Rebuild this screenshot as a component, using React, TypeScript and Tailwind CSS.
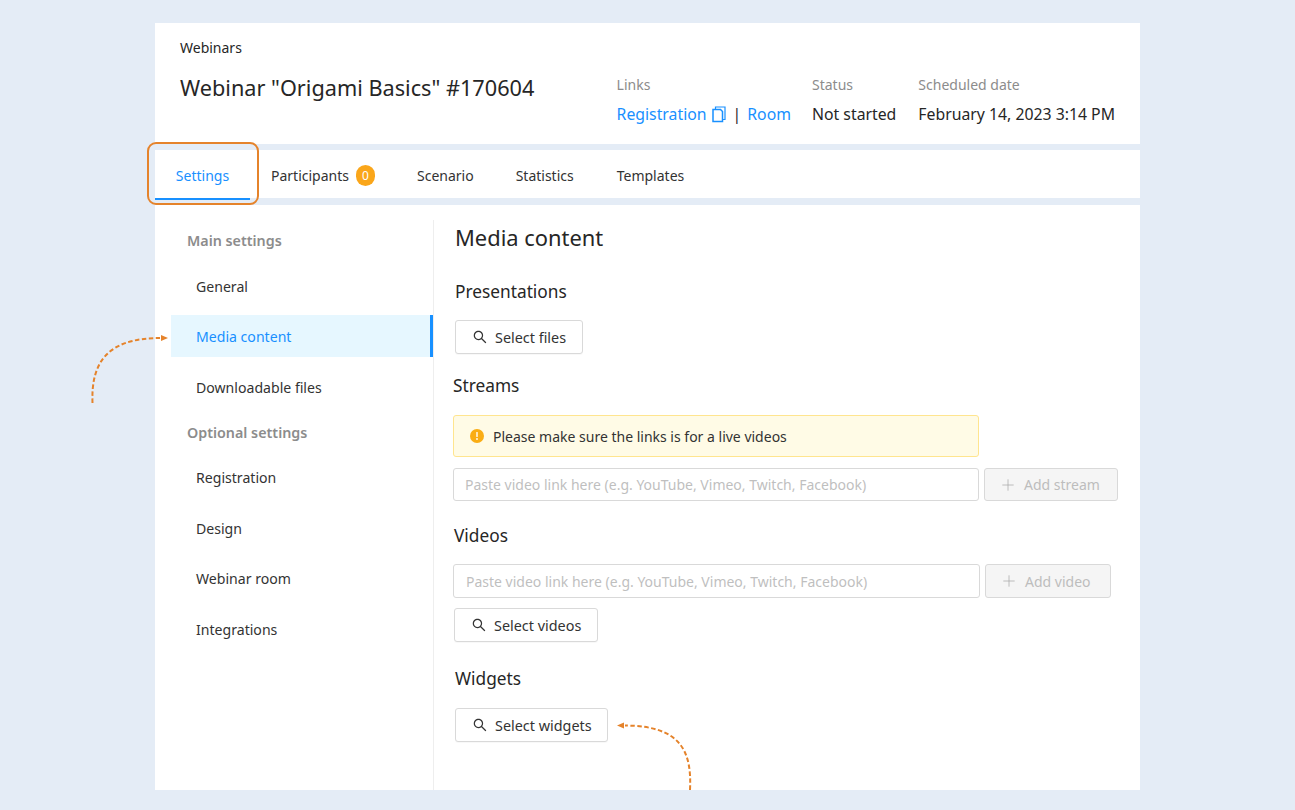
import { Plus } from "lucide-react";
import { AiOutlineSearch } from "react-icons/ai";

function CopyIcon() {
  return (
    <svg width="14" height="17" viewBox="0 0 14 17" fill="none" className="ml-[5px]">
      <path d="M3.5 3V1h9.500v12.500h-2" stroke="#1890ff" strokeWidth="1.200" />
      <path d="M1 3.500h7.500l2 2v10H1z" stroke="#1890ff" strokeWidth="1.500" />
    </svg>
  );
}

function Btn({ label, className }: { label: string; className: string }) {
  return (
    <button className={`h-[34px] flex items-center border border-[#d9d9d9] rounded-[3px] bg-white text-[14.400px] text-[#333] shadow-[0_1px_1px_rgba(0,0,0,0.03)] ${className}`}>
      <AiOutlineSearch size={16} className="mr-[7px] text-[#333]" />
      <span className="pt-[1px]">{label}</span>
    </button>
  );
}

function Disabled({ label, className }: { label: string; className: string }) {
  return (
    <button className={`h-[33px] flex items-center pl-[14px] border border-[#d9d9d9] rounded-[3px] bg-[#f5f5f5] text-[14px] text-[#bdbdbd] ${className}`}>
      <Plus size={18} strokeWidth={1} className="mr-[7px] text-[#a8a8a8]" />
      {label}
    </button>
  );
}

function Field({ className }: { className: string }) {
  return (
    <div className={`h-[33px] flex items-center border border-[#d9d9d9] rounded-[3px] bg-white text-[14px] text-[#bfbfbf] ${className}`}>
      Paste video link here (e.g. YouTube, Vimeo, Twitch, Facebook)
    </div>
  );
}

function NavItem({ label, active }: { label: string; active?: boolean }) {
  return (
    <div className={`h-[42px] flex items-center pl-[25px] text-[14.100px] ${active ? "bg-[#e6f7ff] text-[#1890ff] border-r-[3px] border-[#1890ff]" : "text-[#333] pt-[2px]"}`}>
      {label}
    </div>
  );
}

export default function App() {
  return (
    <div className="relative w-[1295px] h-[810px] overflow-hidden bg-[#e4ecf6] pt-[23px] pl-[155px] text-[#262626]" style={{ fontFamily: '"Noto Sans", sans-serif' }}>
      <div className="w-[985px]">
        {/* Header */}
        <div className="h-[121px] bg-white flex justify-between pl-[25px] pr-[25px]">
          <div>
            <div className="mt-[15px] text-[14px] leading-[20px] text-[#262626]">Webinars</div>
            <h1 className="mt-[15px] text-[21.700px] leading-[30px] text-[#262626]">Webinar "Origami Basics" #170604</h1>
          </div>
          <div className="flex mt-[52px] gap-[21px] text-[15.800px]">
            <div>
              <div className="text-[14px] leading-[20px] text-[#8c8c8c]">Links</div>
              <div className="mt-[9px] flex items-center leading-[20px] text-[#1890ff]">
                Registration
                <CopyIcon />
                <span className="ml-[7px] mr-[6px] text-[#262626]">|</span>
                Room
              </div>
            </div>
            <div className="pr-[1px]">
              <div className="text-[14px] leading-[20px] text-[#8c8c8c]">Status</div>
              <div className="mt-[9px] leading-[20px]">Not started</div>
            </div>
            <div>
              <div className="text-[14px] leading-[20px] text-[#8c8c8c]">Scheduled date</div>
              <div className="mt-[9px] leading-[20px]">February 14, 2023 3:14 PM</div>
            </div>
          </div>
        </div>

        {/* Tabs */}
        <div className="mt-[6px] h-[48px] bg-white flex text-[14px] text-[#333]">
          <div className="relative w-[95px] h-[50px] pt-[2px] flex items-center justify-center text-[#1890ff] border-b-2 border-[#1890ff]">
            Settings
            <div className="absolute left-[-8px] top-[-8px] w-[112px] h-[63px] rounded-[9px] border-2 border-[#e5832b]" />
          </div>
          <div className="ml-[21px] pt-[2px] flex items-center">
            Participants
            <span className="ml-[7px] mt-[1px] w-[19px] h-[21px] rounded-full bg-[#faa61a] text-white text-[12px] flex items-center justify-center">0</span>
          </div>
          <div className="ml-[42px] pt-[2px] flex items-center">Scenario</div>
          <div className="ml-[42px] pt-[2px] flex items-center">Statistics</div>
          <div className="ml-[43px] pt-[2px] flex items-center">Templates</div>
        </div>

        {/* Body */}
        <div className="mt-[7px] h-[585px] bg-white flex">
          <aside className="w-[262px] ml-[16px] mt-[15px] border-r border-[#eeeeee] h-[570px] shrink-0 box-content">
            <div className="w-[262px] pt-[11px]">
              <div className="pl-[16px] text-[14.300px] font-semibold leading-[20px] text-[#8c8c8c] mb-[14px]">Main settings</div>
              <div className="flex flex-col gap-[8.400px]">
                <NavItem label="General" />
                <NavItem label="Media content" active />
                <NavItem label="Downloadable files" />
              </div>
              <div className="pl-[16px] mt-[15px] text-[14.300px] font-semibold leading-[20px] text-[#8c8c8c] mb-[13px]">Optional settings</div>
              <div className="flex flex-col gap-[8.500px]">
                <NavItem label="Registration" />
                <NavItem label="Design" />
                <NavItem label="Webinar room" />
                <NavItem label="Integrations" />
              </div>
            </div>
          </aside>

          <main className="flex-1 pl-[19px] pt-[17px]">
            <h2 className="ml-[2px] text-[21.900px] leading-[32px] text-[#262626]">Media content</h2>
            <h3 className="ml-[2px] mt-[24px] text-[17.300px] leading-[28px] text-[#262626]">Presentations</h3>
            <Btn label="Select files" className="ml-[2px] mt-[14px] w-[128px] pl-[16px]" />
            <h3 className="mt-[18px] text-[17.300px] leading-[28px] text-[#262626]">Streams</h3>
            <div className="mt-[15px] w-[526px] h-[42px] flex items-center border border-[#ffe58f] rounded-[3px] bg-[#fffbe6] pl-[16px] text-[14px] text-[#333]">
              <svg width="14" height="14" viewBox="0 0 14 14" className="mr-[9px]">
                <circle cx="7" cy="7" r="7" fill="#faad14" />
                <rect x="6.300" y="3" width="1.400" height="5" rx="0.600" fill="#fff" />
                <circle cx="7" cy="10" r="0.900" fill="#fff" />
              </svg>
              Please make sure the links is for a live videos
            </div>
            <div className="mt-[11px] flex gap-[5px]">
              <Field className="w-[526px] px-[11px]" />
              <Disabled label="Add stream" className="w-[134px]" />
            </div>
            <h3 className="ml-[1px] mt-[21px] text-[17.300px] leading-[28px] text-[#262626]">Videos</h3>
            <div className="mt-[14px] flex gap-[5px]">
              <Field className="w-[527px] h-[34px] px-[12px]" />
              <Disabled label="Add video" className="w-[126px] h-[34px]" />
            </div>
            <Btn label="Select videos" className="ml-[1px] mt-[10px] w-[144px] pl-[16px]" />
            <h3 className="ml-[2px] mt-[23px] text-[17.300px] leading-[28px] text-[#262626]">Widgets</h3>
            <Btn label="Select widgets" className="ml-[2px] mt-[15px] w-[153px] pl-[16px]" />
          </main>
        </div>
      </div>

      {/* Annotation arrows */}
      <svg className="absolute left-0 top-0 pointer-events-none" width="1295" height="810" fill="none">
        <path d="M92.500 403 C91 365 105 338 160 338" stroke="#e5832b" strokeWidth="2" strokeDasharray="4.500 2.500" />
        <path d="M168 338 l-7 -3 v6 z" fill="#e5832b" />
        <path d="M690 790 C692 750 680 726 625 725.500" stroke="#e5832b" strokeWidth="2" strokeDasharray="4.500 2.500" />
        <path d="M617 725.500 l7 -3 v6 z" fill="#e5832b" />
      </svg>
    </div>
  );
}
